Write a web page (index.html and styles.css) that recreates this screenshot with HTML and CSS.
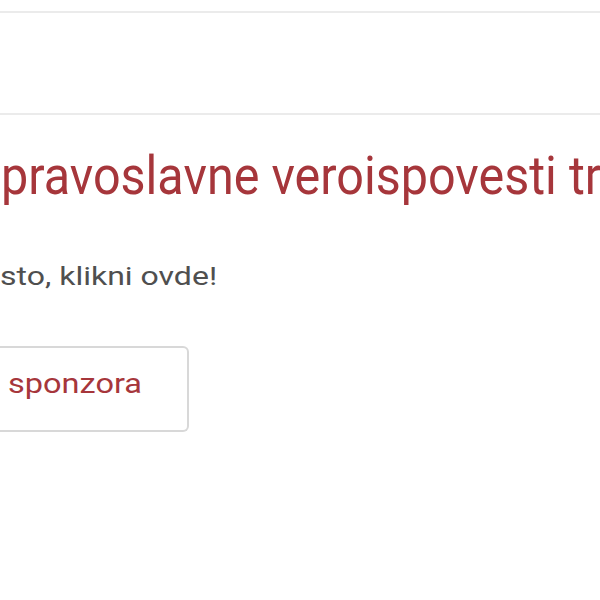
FILE: index.html
```html
<!DOCTYPE html>
<html lang="sr">
<head>
  <meta charset="UTF-8">
  <meta name="viewport" content="width=device-width, initial-scale=1.0">
  <title>Sponzor</title>
  <link rel="stylesheet" href="styles.css">
</head>
<body>
  <div class="topbar"></div>
  <div class="notice">
    <h1 class="notice-title">pravoslavne veroispovesti tr</h1>
    <p class="notice-text"><span class="squash">sto, klikni ovde!</span></p>
    <button type="button" class="sponsor-btn"><span class="squash">sponzora</span></button>
  </div>
</body>
</html>
```

FILE: styles.css
```css
body {
  margin: 0;
  background: #fff;
  font-family: Roboto, "Liberation Sans", sans-serif;
  overflow: hidden;
}

.topbar {
  height: 100px;
  margin-top: 11px;
  border-top: 2px solid #ebebeb;
  border-bottom: 2px solid #ebebeb;
}

.notice {
  padding-top: 31px;
}

.notice-title {
  margin: 0;
  padding-left: 1px;
  font-size: 48.5px;
  font-weight: 400;
  line-height: 60px;
  color: #a6363b;
  white-space: nowrap;
  overflow: hidden;
  transform: scaleY(1.11);
  transform-origin: left center;
}

.squash {
  display: inline-block;
  line-height: 32px;
  transform: scaleY(0.86);
  transform-origin: left center;
}

.notice-text {
  margin: 54px 0 0;
  font-size: 32px;
  line-height: 32px;
  color: #4f4f4f;
}

.notice-text .squash {
  transform: scaleY(0.83);
}

.sponsor-btn {
  display: flex;
  align-items: center;
  margin-top: 54px;
  height: 86px;
  width: 189px;
  padding: 0 0 10px 8px;
  background: #fff;
  border: 2px solid #d8d8d8;
  border-left: none;
  border-radius: 0 6px 6px 0;
  font-family: inherit;
  font-size: 32.5px;
  color: #a6363b;
}
```
